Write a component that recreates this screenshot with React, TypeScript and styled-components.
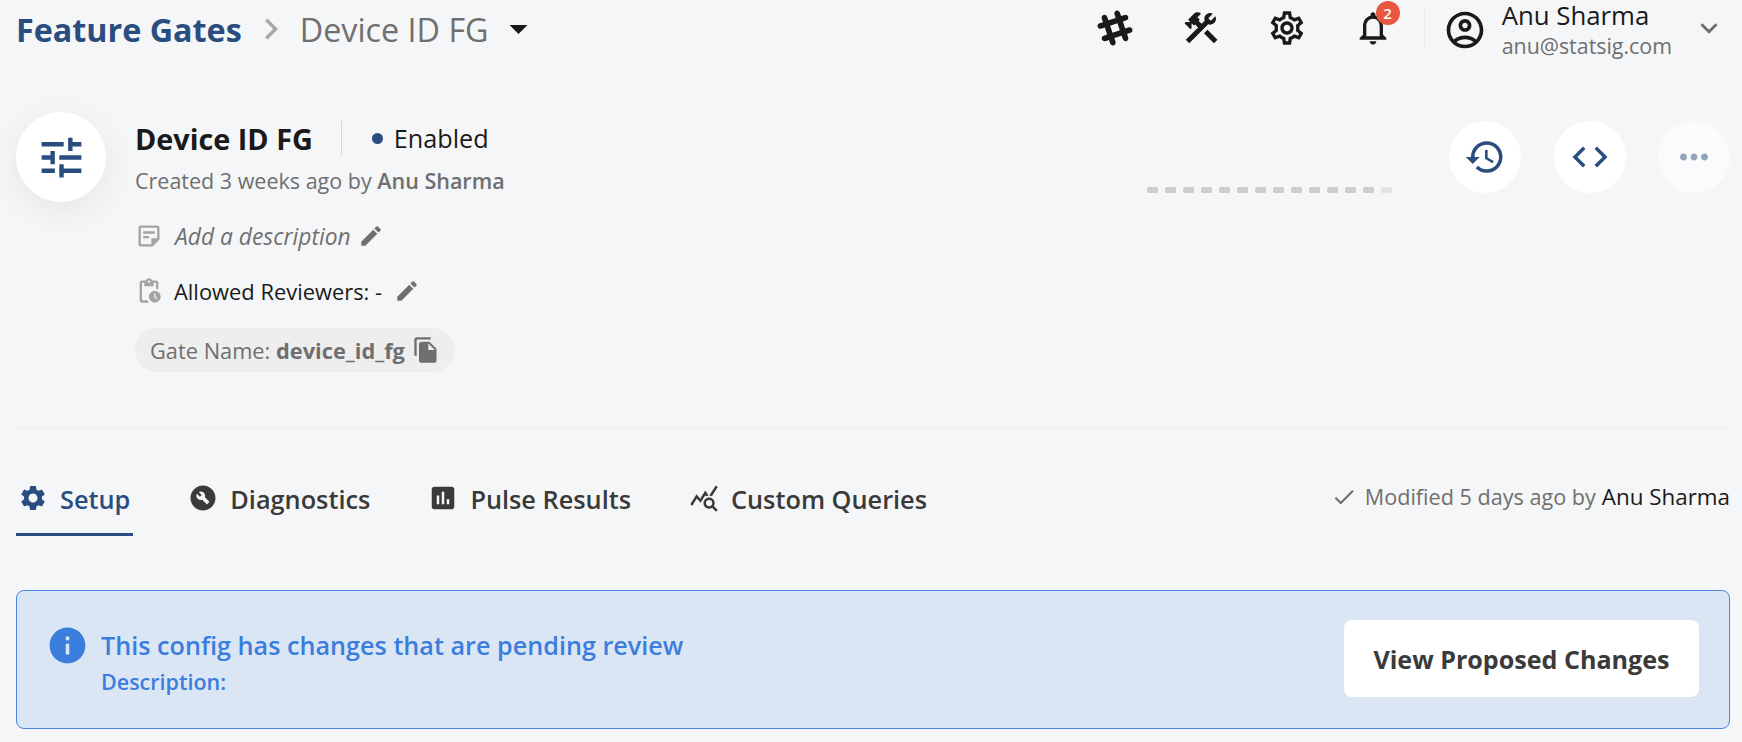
import React from 'react'
import styled, { createGlobalStyle } from 'styled-components'
import { FaSlackHash } from 'react-icons/fa'
import {
    MdArrowDropDown,
    MdAssessment,
    MdBuildCircle,
    MdCheck,
    MdChevronRight,
    MdCode,
    MdConstruction,
    MdEdit,
    MdExpandMore,
    MdFileCopy,
    MdHistory,
    MdInfo,
    MdMoreHoriz,
    MdOutlineAccountCircle,
    MdOutlineNotifications,
    MdOutlinePendingActions,
    MdOutlineSettings,
    MdOutlineStickyNote2,
    MdQueryStats,
    MdSettings,
    MdTune,
} from 'react-icons/md'

const navy = '#2a4d7f'
const grey = '#6f6f6f'
const ink = '#1a1a1a'
const blue = '#3b7ddd'

const GlobalStyle = createGlobalStyle`
    html, body {
        margin: 0;
        background: #f5f6f8;
        font-family: "Open Sans", "Liberation Sans", sans-serif;
        color: ${ink};
    }
`

const Page = styled.div`
    width: 1742px;
    height: 742px;
    box-sizing: border-box;
    padding: 0 12px 0 16px;
    overflow: hidden;
`

const TopBar = styled.header`
    height: 60px;
    display: flex;
    align-items: center;
    justify-content: space-between;
`

const Crumbs = styled.div`
    display: flex;
    align-items: center;
    margin-top: -3px;
`

const CrumbRoot = styled.span`
    font-size: 32.3px;
    font-weight: 700;
    color: ${navy};
`

const CrumbCurrent = styled.span`
    font-size: 32.3px;
    color: ${grey};
`

const CrumbArrow = styled(MdChevronRight)`
    font-size: 42px;
    color: #a8a8a8;
    margin: 0 8px 0 8px;
`

const CrumbCaret = styled(MdArrowDropDown)`
    font-size: 43px;
    color: ${ink};
    margin: 0 0 0 8px;
`

const TopActions = styled.div`
    display: flex;
    align-items: center;
`

const TopIcon = styled.div`
    position: relative;
    width: 40px;
    height: 40px;
    margin: -4px 0 0 46px;
    display: flex;
    align-items: center;
    justify-content: center;
    font-size: 40px;
    color: ${ink};
`

const Badge = styled.span`
    position: absolute;
    top: -7px;
    right: -7px;
    width: 24px;
    height: 24px;
    border-radius: 50%;
    background: #e8573f;
    color: #fff;
    font-size: 15px;
    font-weight: 600;
    line-height: 24px;
    text-align: center;
`

const UserDivider = styled.span`
    width: 1px;
    height: 42px;
    margin: -3px 18px 0 31px;
    background: #eaebee;
`

const UserBox = styled.div`
    display: flex;
    align-items: center;
`

const UserAvatar = styled(MdOutlineAccountCircle)`
    font-size: 44px;
    color: ${ink};
`

const UserText = styled.div`
    margin-left: 15px;
    display: flex;
    flex-direction: column;
    gap: 5px;
`

const UserName = styled.span`
    font-size: 25.8px;
    line-height: 26px;
`

const UserMail = styled.span`
    font-size: 21.4px;
    line-height: 26px;
    color: ${grey};
`

const UserCaret = styled(MdExpandMore)`
    font-size: 34px;
    color: ${grey};
    margin: -4px 4px 0 20px;
`

const Summary = styled.section`
    height: 368px;
    box-sizing: border-box;
    padding-top: 52px;
    display: flex;
    justify-content: space-between;
    border-bottom: 1px solid #ecedf0;
`

const InfoSide = styled.div`
    display: flex;
    align-items: flex-start;
`

const GateBubble = styled.div`
    width: 90px;
    height: 90px;
    border-radius: 50%;
    background: #fff;
    box-shadow: 0 8px 34px rgba(0, 0, 0, 0.07);
    color: ${navy};
    font-size: 53px;
    display: flex;
    align-items: center;
    justify-content: center;
`

const InfoColumn = styled.div`
    margin-left: 29px;
    display: flex;
    flex-direction: column;
    align-items: flex-start;
`

const TitleRow = styled.div`
    display: flex;
    align-items: center;
    height: 34px;
    margin-top: 9px;
`

const GateTitle = styled.span`
    font-size: 28.8px;
    font-weight: 700;
`

const TitleDivider = styled.span`
    width: 1px;
    height: 34px;
    background: #d5d6d9;
    margin: 0 30px 0 28px;
`

const StatusDot = styled.span`
    width: 11px;
    height: 11px;
    border-radius: 50%;
    background: ${navy};
    margin-right: 11px;
`

const StatusLabel = styled.span`
    font-size: 25.2px;
`

const CreatedLine = styled.div`
    font-size: 21.5px;
    line-height: 28px;
    margin: 12px 0 1px;
    color: ${grey};
`

const Strong = styled.b`
    font-weight: 600;
`

const MetaRow = styled.div`
    display: flex;
    align-items: center;
    height: 30px;
    margin-top: 25px;
    font-size: 21.9px;
`

const MetaIcon = styled.span`
    font-size: 28px;
    color: #a3a3a3;
    width: 39px;
    display: flex;
    align-items: center;
`

const Hint = styled.span`
    font-style: italic;
    font-size: 22.8px;
    color: ${grey};
    margin-left: 1px;
`

const EditIcon = styled(MdEdit)<{ $gap: number }>`
    font-size: 26px;
    color: ${grey};
    margin-left: ${p => p.$gap}px;
`

const NamePill = styled.div`
    height: 44px;
    box-sizing: border-box;
    margin-top: 22px;
    padding: 0 15px;
    display: flex;
    align-items: center;
    border-radius: 22px;
    background: #eeeeee;
    color: ${grey};
    font-size: 21.8px;
    font-weight: 500;
`

const CopyIcon = styled(MdFileCopy)`
    font-size: 28px;
    margin-left: 7px;
`

const ActionSide = styled.div`
    display: flex;
    align-items: flex-start;
    padding-top: 9px;
`

const Dashes = styled.div`
    display: flex;
    gap: 7px;
    margin: 66px 0 0;
`

const Dash = styled.span<{ $faint?: boolean }>`
    width: 11px;
    height: 6px;
    border-radius: 1.5px;
    background: ${p => (p.$faint ? '#e3e3e3' : '#cdcdcd')};
`

const ActionButtons = styled.div`
    display: flex;
    gap: 32.5px;
    margin-left: 57px;
`

const RoundButton = styled.button<{ $muted?: boolean }>`
    width: 72px;
    height: 72px;
    padding: 0;
    border: 0;
    border-radius: 50%;
    background: ${p => (p.$muted ? 'rgba(255, 255, 255, 0.5)' : '#fff')};
    color: ${p => (p.$muted ? 'rgba(42, 77, 127, 0.5)' : navy)};
    font-size: 42px;
    display: flex;
    align-items: center;
    justify-content: center;
`

const TabRow = styled.nav`
    height: 106px;
    box-sizing: border-box;
    padding-top: 49px;
    display: flex;
    align-items: flex-start;
    justify-content: space-between;
`

const Tabs = styled.div`
    display: flex;
    gap: 53px;
`

const Tab = styled.div<{ $active?: boolean }>`
    height: 59px;
    box-sizing: border-box;
    padding: 0 3px 0 2px;
    display: flex;
    align-items: flex-start;
    gap: 12px;
    font-size: 25.3px;
    line-height: 45px;
    font-weight: 600;
    color: ${p => (p.$active ? navy : '#3a3a3a')};
    border-bottom: 3px solid ${p => (p.$active ? navy : 'transparent')};
`

const TabIcon = styled.span`
    font-size: 30px;
    height: 45px;
    display: flex;
    align-items: center;
    margin-top: -2px;
`

const Modified = styled.div`
    display: flex;
    align-items: center;
    font-size: 21.6px;
    line-height: 40px;
    color: ${grey};
`

const CheckIcon = styled(MdCheck)`
    font-size: 26px;
    margin-right: 8px;
`

const Author = styled.span`
    color: ${ink};
    font-size: 22.4px;
    font-weight: 500;
    margin-left: 6px;
`

const Banner = styled.section`
    height: 139px;
    margin-top: 56px;
    box-sizing: border-box;
    padding: 0 30px 0 33px;
    display: flex;
    align-items: center;
    justify-content: space-between;
    background: #dbe6f5;
    border: 1px solid #4a86df;
    border-radius: 8px;
    color: ${blue};
`

const BannerBody = styled.div`
    display: flex;
    align-items: flex-start;
    padding-top: 7px;
`

const BannerIcon = styled(MdInfo)`
    font-size: 43px;
    margin: -2px 12px 0 -4px;
`

const BannerText = styled.div`
    display: flex;
    flex-direction: column;
`

const BannerTitle = styled.span`
    font-size: 25.2px;
    line-height: 38px;
    font-weight: 600;
`

const BannerNote = styled.span`
    font-size: 21.5px;
    line-height: 36px;
    font-weight: 600;
`

const ReviewButton = styled.button`
    width: 355px;
    height: 77px;
    margin-bottom: 2px;
    border: 0;
    border-radius: 8px;
    background: #fff;
    color: #3a3a3a;
    font-family: inherit;
    font-size: 25.1px;
    font-weight: 700;
`

const tabs = [
    { label: 'Setup', icon: <MdSettings />, active: true },
    { label: 'Diagnostics', icon: <MdBuildCircle /> },
    { label: 'Pulse Results', icon: <MdAssessment /> },
    { label: 'Custom Queries', icon: <MdQueryStats /> },
]

const App = () => {
    return (
        <Page>
            <GlobalStyle />
            <TopBar>
                <Crumbs>
                    <CrumbRoot>Feature Gates</CrumbRoot>
                    <CrumbArrow />
                    <CrumbCurrent>Device ID FG</CrumbCurrent>
                    <CrumbCaret />
                </Crumbs>
                <TopActions>
                    <TopIcon><FaSlackHash /></TopIcon>
                    <TopIcon><MdConstruction /></TopIcon>
                    <TopIcon><MdOutlineSettings /></TopIcon>
                    <TopIcon>
                        <MdOutlineNotifications />
                        <Badge>2</Badge>
                    </TopIcon>
                    <UserDivider />
                    <UserBox>
                        <UserAvatar />
                        <UserText>
                            <UserName>Anu Sharma</UserName>
                            <UserMail>anu@statsig.com</UserMail>
                        </UserText>
                        <UserCaret />
                    </UserBox>
                </TopActions>
            </TopBar>

            <Summary>
                <InfoSide>
                    <GateBubble><MdTune /></GateBubble>
                    <InfoColumn>
                        <TitleRow>
                            <GateTitle>Device ID FG</GateTitle>
                            <TitleDivider />
                            <StatusDot />
                            <StatusLabel>Enabled</StatusLabel>
                        </TitleRow>
                        <CreatedLine>Created 3 weeks ago by <Strong>Anu Sharma</Strong></CreatedLine>
                        <MetaRow>
                            <MetaIcon><MdOutlineStickyNote2 /></MetaIcon>
                            <Hint>Add a description</Hint>
                            <EditIcon $gap={7} />
                        </MetaRow>
                        <MetaRow>
                            <MetaIcon><MdOutlinePendingActions /></MetaIcon>
                            Allowed Reviewers: -
                            <EditIcon $gap={12} />
                        </MetaRow>
                        <NamePill>
                            <span>Gate Name: <b>device_id_fg</b></span>
                            <CopyIcon />
                        </NamePill>
                    </InfoColumn>
                </InfoSide>
                <ActionSide>
                    <Dashes>
                        {Array.from({ length: 14 }, (_, i) => <Dash key={i} $faint={i === 13} />)}
                    </Dashes>
                    <ActionButtons>
                        <RoundButton><MdHistory /></RoundButton>
                        <RoundButton><MdCode /></RoundButton>
                        <RoundButton $muted><MdMoreHoriz /></RoundButton>
                    </ActionButtons>
                </ActionSide>
            </Summary>

            <TabRow>
                <Tabs>
                    {tabs.map(tab => (
                        <Tab key={tab.label} $active={tab.active}>
                            <TabIcon>{tab.icon}</TabIcon>
                            {tab.label}
                        </Tab>
                    ))}
                </Tabs>
                <Modified>
                    <CheckIcon />
                    Modified 5 days ago by<Author>Anu Sharma</Author>
                </Modified>
            </TabRow>

            <Banner>
                <BannerBody>
                    <BannerIcon />
                    <BannerText>
                        <BannerTitle>This config has changes that are pending review</BannerTitle>
                        <BannerNote>Description:</BannerNote>
                    </BannerText>
                </BannerBody>
                <ReviewButton>View Proposed Changes</ReviewButton>
            </Banner>
        </Page>
    )
}

export default App
